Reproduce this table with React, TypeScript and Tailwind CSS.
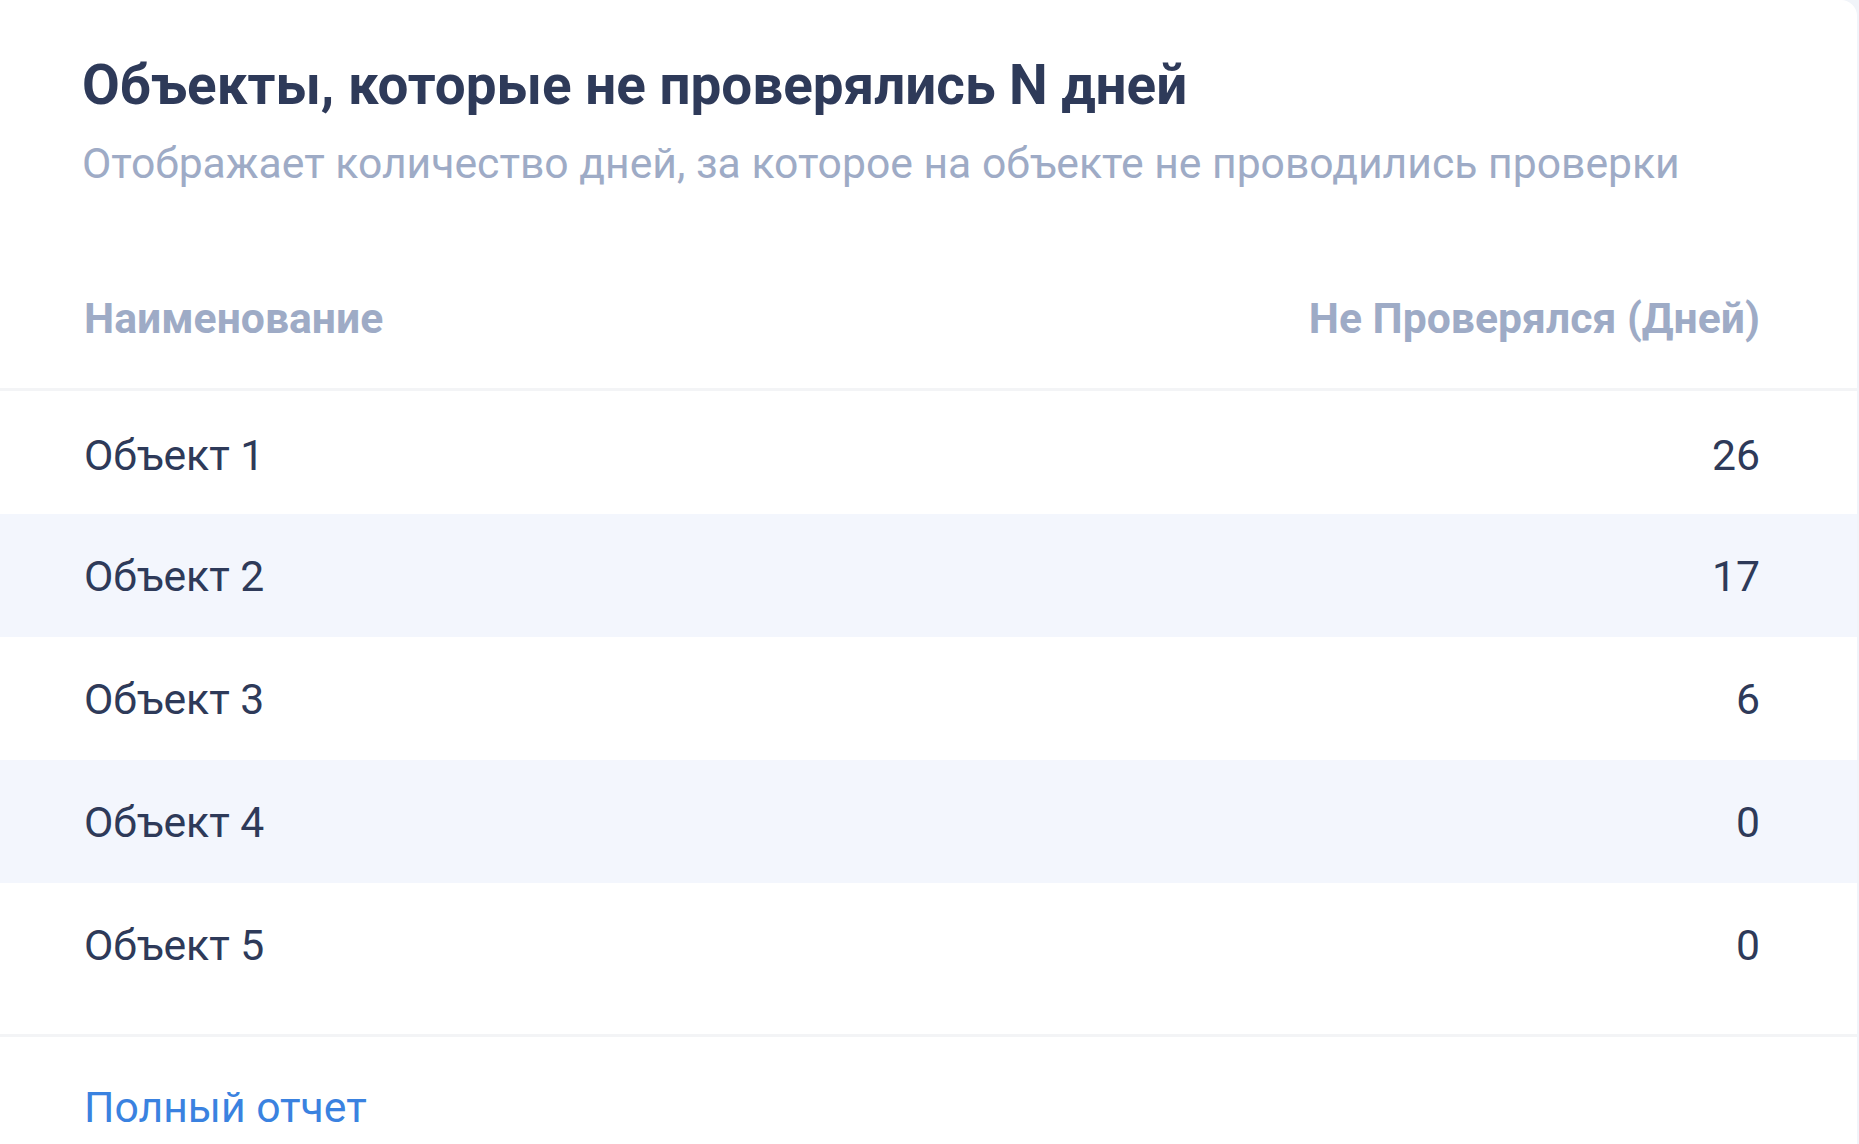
import React from "react";

interface Row {
  name: string;
  days: number;
}

const rows: Row[] = [
  { name: "Объект 1", days: 26 },
  { name: "Объект 2", days: 17 },
  { name: "Объект 3", days: 6 },
  { name: "Объект 4", days: 0 },
  { name: "Объект 5", days: 0 },
];

const App: React.FC = () => {
  return (
    <div className="flex h-[1144px] w-full overflow-hidden bg-[#f1f4f9] font-['Roboto',sans-serif]">
      <div className="flex w-[1857px] flex-col rounded-tr-2xl bg-white">
        {/* Header */}
        <div className="pl-[82px] pr-[97px] pt-[53px]">
          <h2 className="text-[54.8px] font-bold leading-[64px] text-[#2e3a59]">
            Объекты, которые не проверялись N дней
          </h2>
          <p className="mt-[22px] text-[42.7px] leading-[48px] text-[#9eabc6]">
            Отображает количество дней, за которое на объекте не проводились проверки
          </p>
        </div>

        {/* Table head */}
        <div className="flex items-center justify-between pl-[84px] pr-[97px] pt-[106px] pb-[45px] text-[42.7px] font-bold leading-[50px] text-[#9eabc6]">
          <span>Наименование</span>
          <span>Не Проверялся (Дней)</span>
        </div>
        <div className="h-[3px] bg-[#f3f4f6]" />

        {/* Rows */}
        <div className="pb-[28px]">
          {rows.map((row, i) => (
            <div
              key={row.name}
              className={`flex h-[123px] items-center justify-between pl-[84px] pr-[97px] pt-[1px] text-[42.7px] text-[#2e3a59] ${
                i % 2 === 1 ? "bg-[#f3f6fd]" : "bg-white"
              } ${i === 0 ? "pt-[6px]" : ""}`}
            >
              <span>{row.name}</span>
              <span>{row.days}</span>
            </div>
          ))}
        </div>
        <div className="h-[3px] bg-[#f3f4f6]" />

        {/* Footer */}
        <div className="pl-[84px] pt-[45px]">
          <a href="#" className="text-[42.7px] leading-[50px] text-[#3a82e0]">
            Полный отчет
          </a>
        </div>
      </div>
    </div>
  );
};

export default App;
